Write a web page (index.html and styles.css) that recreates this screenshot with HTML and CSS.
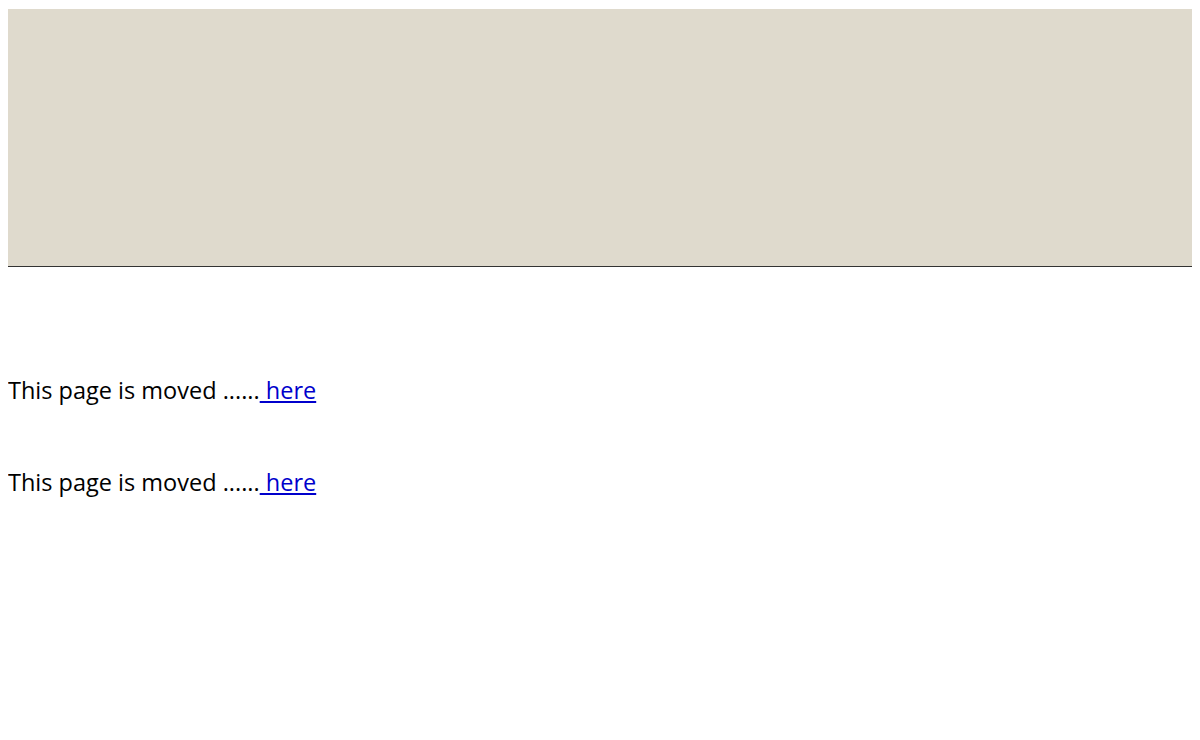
FILE: index.html
```html
<!DOCTYPE html>
<html>
<head>
<meta charset="utf-8">
<link rel="stylesheet" href="styles.css">
</head>
<body>
<div class="banner"></div>
<div class="content">
<p class="msg">This page is moved ......<a href="#"> here</a></p>
<p class="msg">This page is moved ......<a href="#"> here</a></p>
</div>
</body>
</html>
```
FILE: styles.css
```css
body {
  margin: 8px;
  font-family: "Open Sans", "Noto Sans", sans-serif;
  background: #ffffff;
  color: #000000;
}
.banner {
  margin-top: 1px;
  height: 257px;
  background: #dfdacd;
  border-bottom: 1px solid #333333;
}
.content {
  padding-top: 107px;
}
.msg {
  margin: 0 0 60px 0;
  font-size: 23.5px;
  line-height: 32px;
}
.msg a {
  color: #0000cc;
}
```
